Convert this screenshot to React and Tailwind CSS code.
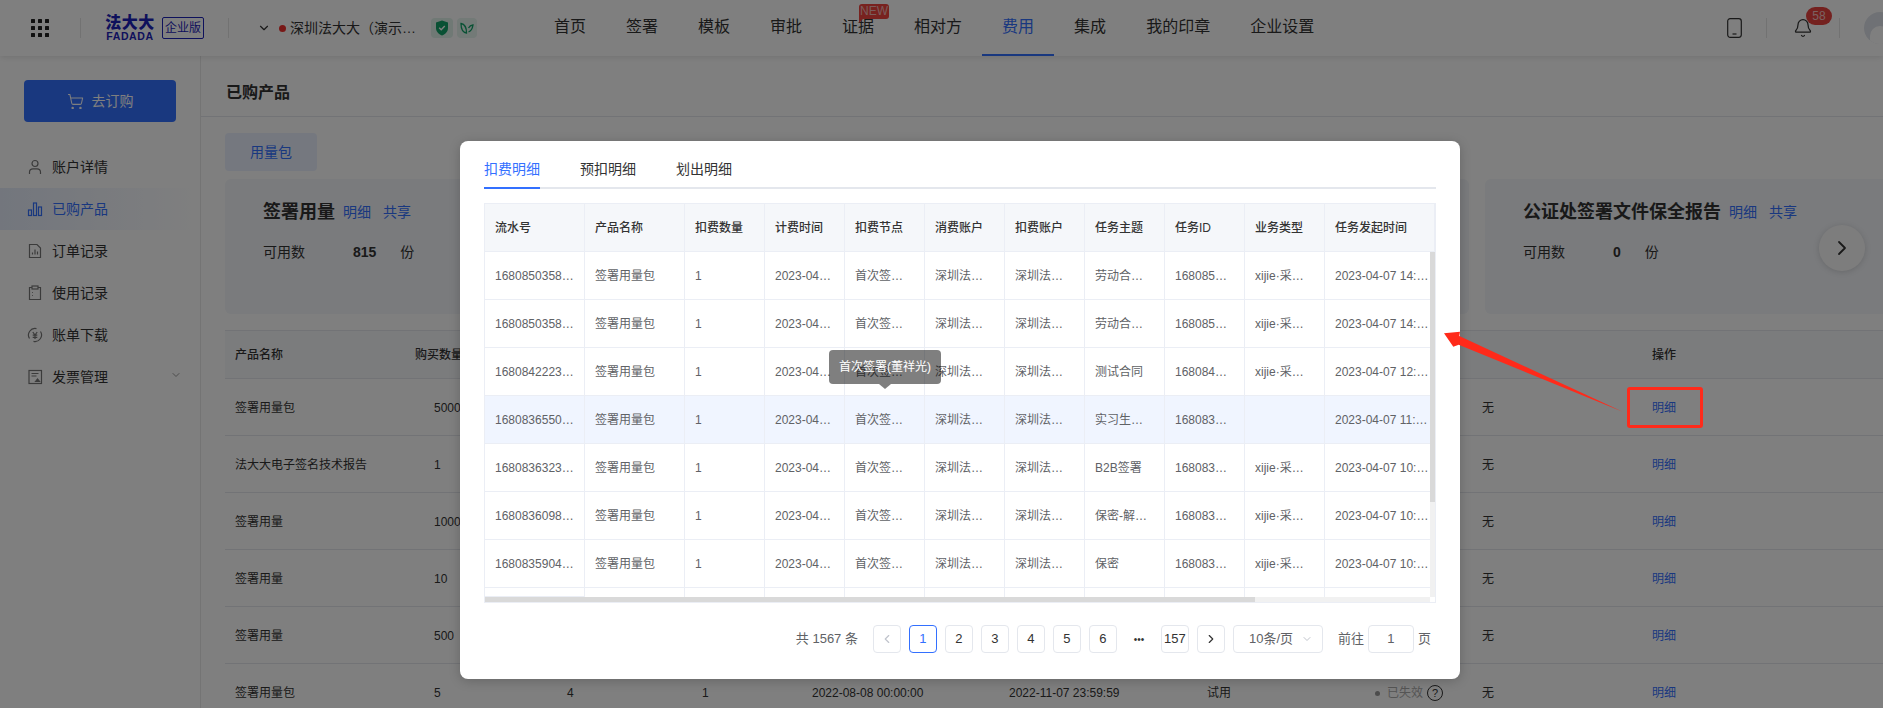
import { Bell, ChevronDown, ChevronLeft, ChevronRight, ShoppingCart } from 'lucide-react';

const navItems = ['首页', '签署', '模板', '审批', '证据', '相对方', '费用', '集成', '我的印章', '企业设置'];

const sideItems = [
  { label: '账户详情', icon: 'user' },
  { label: '已购产品', icon: 'bars', active: true },
  { label: '订单记录', icon: 'doc' },
  { label: '使用记录', icon: 'clip' },
  { label: '账单下载', icon: 'yen' },
  { label: '发票管理', icon: 'invoice', caret: true },
];

const buyRows = [
  { name: '签署用量包', qty: '5000' },
  { name: '法大大电子签名技术报告', qty: '1' },
  { name: '签署用量', qty: '1000' },
  { name: '签署用量', qty: '10' },
  { name: '签署用量', qty: '500' },
  {
    name: '签署用量包',
    qty: '5',
    c3: '4',
    c4: '1',
    start: '2022-08-08 00:00:00',
    end: '2022-11-07 23:59:59',
    type: '试用',
    expired: true,
  },
];

const detailHeaders = ['流水号', '产品名称', '扣费数量', '计费时间', '扣费节点', '消费账户', '扣费账户', '任务主题', '任务ID', '业务类型', '任务发起时间'];

const detailRows = [
  ['1680850358…', '劳动合…', '168085…', 'xijie·采…', '2023-04-07 14:…'],
  ['1680850358…', '劳动合…', '168085…', 'xijie·采…', '2023-04-07 14:…'],
  ['1680842223…', '测试合同', '168084…', 'xijie·采…', '2023-04-07 12:…'],
  ['1680836550…', '实习生…', '168083…', '', '2023-04-07 11:…'],
  ['1680836323…', 'B2B签署', '168083…', 'xijie·采…', '2023-04-07 10:…'],
  ['1680836098…', '保密-解…', '168083…', 'xijie·采…', '2023-04-07 10:…'],
  ['1680835904…', '保密', '168083…', 'xijie·采…', '2023-04-07 10:…'],
];

function SideIcon({ type, className }) {
  const common = { width: 16, height: 16, viewBox: '0 0 16 16', fill: 'none', stroke: 'currentColor', strokeWidth: 1.2, className };
  if (type === 'user') {
    return (
      <svg {...common}>
        <circle cx="8" cy="4.5" r="3" />
        <path d="M2.5 15v-2c0-2 1.5-3.2 3.5-3.2h4c2 0 3.500 1.200 3.500 3.200v2" />
      </svg>
    );
  }
  if (type === 'bars') {
    return (
      <svg {...common}>
        <rect x="1.500" y="9" width="3" height="5.500" />
        <rect x="6.500" y="2" width="3" height="12.500" />
        <rect x="11.500" y="6" width="3" height="8.500" />
      </svg>
    );
  }
  if (type === 'doc') {
    return (
      <svg {...common}>
        <path d="M2.500 1.500h7.500l3.500 3.500v9.500h-11z" />
        <path d="M5.500 11.500v-2M8 11.500v-5M10.500 11.500v-3" />
      </svg>
    );
  }
  if (type === 'clip') {
    return (
      <svg {...common}>
        <path d="M5 2.500h-2.500v12h11v-12h-2.500" />
        <rect x="5" y="1" width="6" height="3" />
        <path d="M5 7.500h.8M5 10.500h.8" />
      </svg>
    );
  }
  if (type === 'yen') {
    return (
      <svg {...common}>
        <path d="M2.500 11.500a6.500 6.500 0 0 1 7-9.800M13.500 4.500a6.500 6.500 0 0 1-7 9.800" />
        <path d="M5.800 5l2.200 3 2.200-3M5.700 8.200h4.600M5.700 10.300h4.600M8 8v4" />
      </svg>
    );
  }
  return (
    <svg {...common}>
      <rect x="2" y="1.500" width="12.500" height="13" />
      <path d="M4.500 4.500h7M4.500 7h5" />
      <path d="M8.500 12.500l2-2.500 2 2.500z" fill="currentColor" />
    </svg>
  );
}

function Header() {
  return (
    <header className="relative z-10 flex h-14 shrink-0 items-center bg-white shadow-[0_1px_6px_rgba(0,0,0,0.12)]">
      <svg width="18" height="18" viewBox="0 0 18 18" className="ml-[31px] text-[#222]" fill="currentColor">
        {[0, 7, 14].map((y) => [0, 7, 14].map((x) => <rect key={`${x}-${y}`} x={x} y={y} width="4" height="4" rx="0.5" />))}
      </svg>
      <div className="ml-[31px] h-5 w-px bg-[#e5e5e5]" />
      <div className="ml-6 flex w-[50px] flex-col items-center text-[#1c22b8]">
        <span className="text-[16px] leading-[14px] font-black tracking-[0.5px]">法大大</span>
        <span className="mt-[1px] text-[10.500px] leading-[10px] font-bold tracking-[0.6px]">FADADA</span>
      </div>
      <div className="ml-[7px] flex h-[22px] w-[42px] items-center justify-center rounded-[2px] border border-[#1c22b8] text-[12px] text-[#1c22b8]">
        企业版
      </div>
      <div className="ml-6 h-5 w-px bg-[#e5e5e5]" />
      <ChevronDown size={14} className="ml-[28px] text-[#333]" />
      <span className="ml-[8px] h-[7px] w-[7px] rounded-full bg-[#f0312e]" />
      <span className="ml-[4px] w-[124px] text-[14px] whitespace-nowrap text-[#333]">深圳法大大（演示…</span>
      <div className="ml-[17px] flex h-5 w-[22px] items-center justify-center rounded-[4px] bg-[#e0f2ea]">
        <svg width="14" height="16" viewBox="0 0 14 16">
          <path d="M7 0.500l6 2v5.500c0 3.500-2.500 6-6 7.500-3.500-1.500-6-4-6-7.500v-5.500z" fill="#12a268" />
          <path d="M4.200 7.800l2 2 3.600-3.800" fill="none" stroke="#fff" strokeWidth="1.400" />
        </svg>
      </div>
      <div className="ml-1 flex h-5 w-5 items-center justify-center rounded-[4px] bg-[#e6f4ee]">
        <svg width="14" height="12" viewBox="0 0 14 12" fill="none" stroke="#12a268" strokeWidth="1.300">
          <path d="M6.500 11c-3-.5-5.500-3.500-5.500-9.500 3 .5 5.500 3 5.500 9.500z" />
          <path d="M8.500 10c2.500-1 4-3.500 4.500-7-2 .3-3.500 1.300-4.500 3" />
        </svg>
      </div>
      <nav className="ml-[57px] flex h-full">
        {navItems.map((item) => (
          <div
            key={item}
            className={`relative flex h-full items-center border-b-2 px-5 text-[16px] whitespace-nowrap ${
              item === '费用' ? 'border-[#3370ff] text-[#3370ff]' : 'border-transparent text-[#333]'
            }`}
          >
            {item}
            {item === '证据' && (
              <span className="absolute top-1 left-[37px] h-[15px] w-[30px] rounded-[3px] rounded-bl-none bg-[#f0443e] text-center text-[12px] leading-[15px] text-[#f6b9b6]">
                NEW
                <span className="absolute top-[15px] left-0 border-t-[4px] border-r-[4px] border-t-[#f0443e] border-r-transparent" />
              </span>
            )}
          </div>
        ))}
      </nav>
      <div className="ml-auto flex items-center">
        <svg width="15" height="20" viewBox="0 0 15 20" fill="none" stroke="#333" strokeWidth="1.200">
          <rect x="0.700" y="0.700" width="13.600" height="18.600" rx="2.500" />
          <path d="M5.500 16h4" />
        </svg>
        <div className="ml-6 h-5 w-px bg-[#e5e5e5]" />
        <div className="relative ml-[26px] flex">
          <Bell size={20} strokeWidth={1.500} className="text-[#333]" />
          <span className="absolute top-[-11px] left-[13px] h-[18px] w-[26px] rounded-full bg-[#e9433f] text-center text-[12px] leading-[18px] text-[#f6c4c2]">58</span>
        </div>
        <div className="ml-[26px] h-5 w-px bg-[#e5e5e5]" />
        <div className="mr-[-13px] ml-6 flex h-8 w-8 items-end justify-center overflow-hidden rounded-full bg-[#dfe3ea]">
          <div className="mb-[-6px] h-6 w-5 rounded-full bg-white" />
        </div>
      </div>
    </header>
  );
}

function Sidebar() {
  return (
    <aside className="w-[201px] shrink-0 border-r border-[#e8e8e8]">
      <button className="mt-6 ml-6 flex h-[42px] w-[152px] items-center justify-center gap-2 rounded-[4px] bg-[#3370ff] text-[14px] text-white">
        <ShoppingCart size={17} strokeWidth={1.500} />
        去订购
      </button>
      <ul className="mt-6">
        {sideItems.map((item) => (
          <li
            key={item.label}
            className={`flex h-[42px] items-center pl-[27px] text-[14px] ${
              item.active ? 'bg-linear-to-r from-[#e6edfb] to-white text-[#3370ff]' : 'text-[#333]'
            }`}
          >
            <SideIcon type={item.icon} className={item.active ? 'text-[#3370ff]' : 'text-[#777]'} />
            <span className="ml-[9px]">{item.label}</span>
            {item.caret && <ChevronDown size={12} className="mt-[-4px] ml-[62px] text-[#999]" />}
          </li>
        ))}
      </ul>
    </aside>
  );
}

function UsageCard({ title, count, className }) {
  return (
    <div className={`h-[135px] shrink-0 rounded-[6px] bg-[#f4f6fa] pt-[22px] pl-[38px] ${className}`}>
      <div className="flex items-center">
        <span className="text-[18px] leading-[22px] font-bold whitespace-nowrap text-[#333]">{title}</span>
        <span className="ml-2 text-[14px] text-[#3370ff]">明细</span>
        <span className="ml-3 text-[14px] text-[#3370ff]">共享</span>
      </div>
      <div className="mt-[19px] flex items-center text-[14px] text-[#333]">
        <span className="w-[90px]">可用数</span>
        <span className="mr-6 font-bold">{count}</span>
        <span>份</span>
      </div>
    </div>
  );
}

function PurchasedTable() {
  const grid = 'grid grid-cols-[190px_152px_135px_110px_197px_198px_168px_107px_170px_1fr]';
  return (
    <div className="mt-4 text-[12px] text-[#333]">
      <div className={`${grid} h-[49px] items-center border-y border-[#e4e7ed] bg-[#f7f8fa] font-medium`}>
        <span className="pl-[10px]">产品名称</span>
        <span>购买数量</span>
        <span />
        <span />
        <span />
        <span />
        <span />
        <span />
        <span />
        <span>操作</span>
      </div>
      {buyRows.map((row, i) => (
        <div key={i} className={`${grid} h-[57px] items-center border-b border-[#e4e7ed] pt-[2px]`}>
          <span className="pl-[10px]">{row.name}</span>
          <span className="pl-[19px]">{row.qty}</span>
          <span>{row.c3}</span>
          <span>{row.c4}</span>
          <span>{row.start}</span>
          <span>{row.end}</span>
          <span>{row.type}</span>
          <span className="flex items-center">
            {row.expired && (
              <>
                <span className="h-[5px] w-[5px] rounded-full bg-[#999]" />
                <span className="ml-[7px] text-[#aaa]">已失效</span>
                <span className="ml-[4px] flex h-4 w-4 items-center justify-center rounded-full border-[1.500px] border-[#333] text-[11px] leading-none">?</span>
              </>
            )}
          </span>
          <span>无</span>
          <span className="text-[#3370ff]">明细</span>
        </div>
      ))}
    </div>
  );
}

function DetailModal() {
  const cols = 'grid grid-cols-[100px_100px_80px_80px_80px_80px_80px_80px_80px_80px_110px]';
  const cell = 'flex items-center border-r border-[#ebeef5] pl-[10px] whitespace-nowrap overflow-hidden';
  return (
    <div className="relative h-[538px] w-[1000px] rounded-[8px] bg-white px-6 shadow-[0_2px_12px_rgba(0,0,0,0.2)]">
      <div className="flex h-12 items-end border-b-2 border-[#e4e7ed] text-[14px] text-[#333]">
        <span className="mb-[-2px] border-b-2 border-[#3370ff] pb-[7px] text-[#3370ff]">扣费明细</span>
        <span className="ml-10 pb-[7px]">预扣明细</span>
        <span className="ml-10 pb-[7px]">划出明细</span>
      </div>

      <div className="relative mt-[14px] flex h-[400px] flex-col border border-[#ebeef5] text-[12px] text-[#606266]">
        <div className="h-[393px] overflow-hidden">
          <div className={`${cols} h-12 border-b border-[#ebeef5] bg-[#f5f7fa] font-medium text-[#333]`}>
            {detailHeaders.map((title) => (
              <div key={title} className={cell}>
                {title}
              </div>
            ))}
          </div>
          {detailRows.map((row, i) => (
            <div key={i} className={`${cols} h-12 border-b border-[#ebeef5] ${i === 3 ? 'bg-[#f0f5ff]' : 'bg-white'}`}>
              <div className={cell}>{row[0]}</div>
              <div className={cell}>签署用量包</div>
              <div className={cell}>1</div>
              <div className={cell}>2023-04…</div>
              <div className={cell}>首次签…</div>
              <div className={cell}>深圳法…</div>
              <div className={cell}>深圳法…</div>
              <div className={cell}>{row[1]}</div>
              <div className={cell}>{row[2]}</div>
              <div className={cell}>{row[3]}</div>
              <div className={cell}>{row[4]}</div>
            </div>
          ))}
          <div className={`${cols} h-12`}>
            {detailHeaders.map((title, i) => (
              <div key={title} className="border-r border-[#ebeef5]">
                {i === 0 && <div className="h-[9px] border-b border-[#ebeef5]" />}
              </div>
            ))}
          </div>
        </div>
        <div className="mr-[5px] h-[5px] bg-[#f1f1f1]">
          <div className="h-full w-[770px] bg-[#d9d9d9]" />
        </div>
        <div className="absolute top-12 right-0 bottom-[5px] w-[5px] bg-[#f1f1f1]">
          <div className="h-[250px] bg-[#d9d9d9]" />
        </div>
      </div>

      <div className="mt-[22px] flex h-7 items-center justify-end pr-[5px] text-[13px] text-[#606266]">
        <span className="mr-[15px]">共 1567 条</span>
        <div className="flex gap-2">
          <span className="flex h-7 w-7 items-center justify-center rounded-[4px] border border-[#e4e7ed] text-[#c0c4cc]">
            <ChevronLeft size={14} />
          </span>
          {['1', '2', '3', '4', '5', '6', '•••', '157'].map((page) => (
            <span
              key={page}
              className={`flex h-7 w-7 items-center justify-center rounded-[4px] ${
                page === '1' ? 'border border-[#3370ff] text-[#3370ff]' : page === '•••' ? 'text-[10px] text-[#333]' : 'border border-[#e4e7ed] text-[#333]'
              }`}
            >
              {page}
            </span>
          ))}
          <span className="flex h-7 w-7 items-center justify-center rounded-[4px] border border-[#e4e7ed] text-[#333]">
            <ChevronRight size={14} />
          </span>
        </div>
        <div className="ml-[8px] flex h-7 w-[90px] items-center justify-between rounded-[4px] border border-[#e4e7ed] pr-[9px] pl-[15px]">
          <span>10条/页</span>
          <ChevronDown size={12} className="text-[#c0c4cc]" />
        </div>
        <span className="ml-[15px]">前往</span>
        <span className="ml-1 flex h-7 w-[46px] items-center justify-center rounded-[4px] border border-[#e4e7ed]">1</span>
        <span className="ml-1">页</span>
      </div>

      {/* hover tooltip on the 扣费节点 cell */}
      <div className="absolute top-[209px] left-[369px] flex flex-col items-center">
        <div className="flex h-[34px] w-[112px] items-center justify-center rounded-[4px] bg-black/50 text-[12px] whitespace-nowrap text-white">
          首次签署(董祥光)
        </div>
        <span className="border-x-[6px] border-t-[5px] border-x-transparent border-t-black/50" />
      </div>
    </div>
  );
}

export default function App() {
  return (
    <div className="relative flex h-[708px] w-full flex-col overflow-hidden bg-white font-['Liberation_Sans','Noto_Sans_CJK_SC',sans-serif]">
      <Header />
      <div className="flex min-h-0 flex-1">
        <Sidebar />
        <main className="min-w-0 flex-1">
          <div className="flex h-[61px] items-end border-b border-[#e4e7ed] pb-[11px] pl-[25px] text-[16px] font-bold text-[#333]">已购产品</div>
          <div className="pt-[16px] pl-6">
            <div className="flex h-[38px] w-[92px] items-center justify-center rounded-[4px] bg-[#ebf1fe] text-[14px] text-[#3370ff]">用量包</div>
            <div className="mt-2 flex gap-4 overflow-hidden">
              <UsageCard title="签署用量" count="815" className="w-[622px]" />
              <UsageCard title="" count="" className="w-[606px]" />
              <UsageCard title="公证处签署文件保全报告" count="0" className="w-[430px]" />
            </div>
            <PurchasedTable />
          </div>
        </main>
      </div>
      <button className="absolute top-[225px] left-[1819px] z-10 flex h-[46px] w-[46px] items-center justify-center rounded-full bg-[#fbfbfb] text-[#333] shadow-[0_1px_6px_rgba(0,0,0,0.15)]">
        <ChevronRight size={24} strokeWidth={1.800} />
      </button>

      <div className="absolute inset-0 z-20 flex items-start bg-black/50 pt-[141px] pl-[460px]">
        <DetailModal />
      </div>

      {/* red annotation drawn on top of the screenshot */}
      <div className="absolute top-[387px] left-[1627px] z-30 h-[41px] w-[76px] rounded-[3px] border-[3px] border-[#ff2a1a]" />
      <svg className="absolute top-[325px] left-[1440px] z-30" width="190" height="95" viewBox="1440 325 190 95">
        <polygon points="1444,333.300 1460,331.700 1459.300,336 1622.700,411.700 1458.700,344.700 1453.300,346.700" fill="#ff2a1a" />
      </svg>
    </div>
  );
}
